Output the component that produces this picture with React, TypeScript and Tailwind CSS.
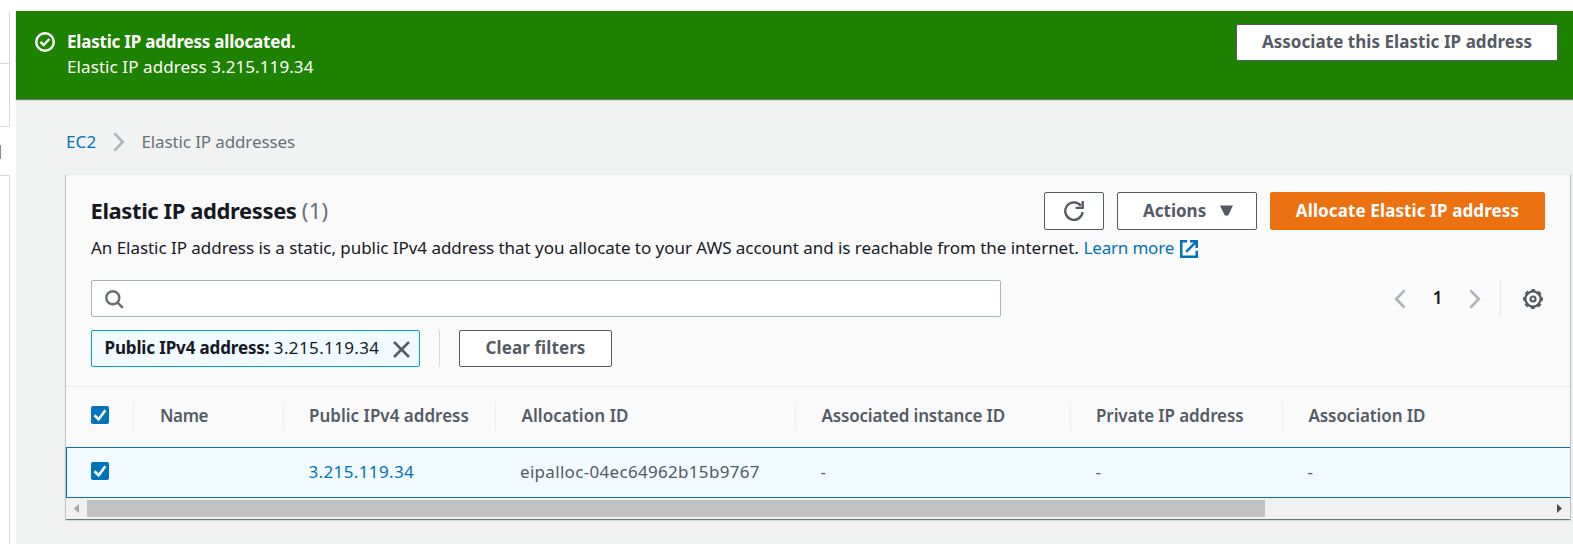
import type { ReactNode } from "react";

function Check() {
  return (
    <span className="flex h-[18px] w-[18px] shrink-0 rounded-[2px] bg-[#0073bb]">
      <svg width="18" height="18" viewBox="0 0 18 18" fill="none" stroke="#fff" strokeWidth="2.6">
        <path d="M3.4 9.2 7.600 13.200 14.400 4.200" />
      </svg>
    </span>
  );
}

function Chevron({ flip = false }: { flip?: boolean }) {
  return (
    <svg width="12" height="20" viewBox="0 0 12 20" fill="none" stroke="#aab7b8" strokeWidth="2.6">
      <path d={flip ? "M10.6 1.4 2.2 10l8.4 8.6" : "M1.4 1.4 9.8 10l-8.4 8.6"} />
    </svg>
  );
}

function Button({ className, children }: { className: string; children: ReactNode }) {
  return (
    <button
      type="button"
      className={`flex shrink-0 items-center whitespace-nowrap rounded-[2px] border font-bold ${className}`}
    >
      {children}
    </button>
  );
}

function HeaderCell({ className, children }: { className: string; children?: ReactNode }) {
  return (
    <div className={`flex h-[29px] shrink-0 items-center whitespace-nowrap ${className}`}>{children}</div>
  );
}

export default function App() {
  return (
    <div className="flex h-[544px] w-[1573px] overflow-hidden bg-white pt-[11px] font-['Noto_Sans',sans-serif] text-[17px] leading-[25px] text-[#16191f]">
      <aside className="flex w-[16px] shrink-0 flex-col">
        <div className="h-[53px] w-[10px] border-r border-b border-[#d9d9d9]" />
        <div className="h-[63px] w-[10px] border-r border-b border-[#d9d9d9]" />
        <div className="mt-[18px] h-[14px] w-px bg-[#8c8c8c]" />
        <div className="mt-[16px] w-[10px] flex-1 border-t border-r border-[#d9d9d9]" />
      </aside>

      <main className="flex min-w-0 flex-1 flex-col bg-[#f1f3f3]">
        <section className="flex h-[88px] shrink-0 items-start bg-[#1d8102] pl-[19px] text-white shadow-[0_1px_1px_0_rgba(0,0,0,0.5)]">
          <svg className="mt-[21px] shrink-0" width="20" height="20" viewBox="0 0 20 20" fill="none" stroke="#fff" strokeWidth="2.4">
            <circle cx="10" cy="10" r="8.8" />
            <path d="M5.4 9.8 8.7 13l5.7-6" />
          </svg>
          <div className="mt-[18px] ml-[12px] flex-1">
            <p className="font-bold tracking-[-0.2px]">Elastic IP address allocated.</p>
            <p className="tracking-[0.09px]">Elastic IP address 3.215.119.34</p>
          </div>
          <Button className="mt-[13px] mr-[15px] h-[37px] w-[322px] justify-center border-[#545b64] bg-white pb-[2px] tracking-[0.05px] text-[#545b64]">
            Associate this Elastic IP address
          </Button>
        </section>

        <nav className="mt-[30px] ml-[50px] flex h-[25px] items-center">
          <span className="w-[47px] tracking-[0.1px] text-[#0073bb]">EC2</span>
          <Chevron />
          <span className="ml-[16.500px] tracking-[-0.12px] text-[#687078]">Elastic IP addresses</span>
        </nav>

        <section className="mt-[20px] ml-[50px] flex h-[345px] w-[1504px] shrink-0 flex-col border-t border-[#eaeded] bg-[#fafafa] shadow-[0_1px_1px_0_rgba(0,28,36,0.4),1px_1px_1px_0_rgba(0,28,36,0.15),-1px_1px_1px_0_rgba(0,28,36,0.15)]">
          <div className="mt-[17px] flex h-[38px] items-center pr-[25px] pl-[24.500px]">
            <h1 className="flex-1 pb-[2px] text-[22px] font-bold tracking-[-0.4px]">
              Elastic IP addresses <span className="font-normal tracking-[0.2px] text-[#687078]">(1)</span>
            </h1>
            <Button className="h-[38px] w-[60px] justify-center border-[#545b64] bg-white text-[#545b64]">
              <svg width="20" height="20" viewBox="0 0 20 20" fill="none" stroke="#545b64" strokeWidth="2.4">
                <path d="M18.6 11.2a8.7 8.7 0 1 1-1.8-6.5" />
                <path d="M18.7 0v6.9h-7" />
              </svg>
            </Button>
            <Button className="ml-[13px] h-[38px] w-[140px] border-[#545b64] bg-white pb-[1px] pl-[25px] tracking-[0px] text-[#545b64]">
              Actions
              <svg className="ml-[14px]" width="13" height="11" viewBox="0 0 13 11" fill="#545b64">
                <path d="M0 .5h13L8.2 10.500H4.800Z" />
              </svg>
            </Button>
            <Button className="ml-[13px] h-[38px] w-[275px] justify-center border-[#ec7211] bg-[#ec7211] pb-[1px] tracking-[0.12px] text-white">
              Allocate Elastic IP address
            </Button>
          </div>

          <p className="mt-[5px] flex h-[25px] items-center pl-[25px] whitespace-nowrap">
            <span className="w-[992.500px] tracking-[-0.04px]">
              An Elastic IP address is a static, public IPv4 address that you allocate to your AWS account and is reachable from the internet.
            </span>
            <a className="flex items-center tracking-[-0.18px] text-[#0073bb]">
              Learn more
              <svg className="mt-[2px] ml-[6px]" width="18" height="18" viewBox="0 0 18 18" fill="none" stroke="#0073bb" strokeWidth="2.5">
                <path d="M7.2 1.25H1.25v15.5h15.5v-6" />
                <path d="M10 1.250h6.750V8M16.300 1.700 6.200 11.800" />
              </svg>
            </a>
          </p>

          <div className="mt-[20px] flex h-[37px] items-center pr-[27px] pl-[25px]">
            <div className="flex h-[37px] w-[910px] items-center rounded-[2px] border border-[#aab7b8] bg-white pl-[13px]">
              <svg className="mt-px" width="19" height="19" viewBox="0 0 19 19" fill="none" stroke="#687078" strokeWidth="2.5">
                <circle cx="7.8" cy="7.8" r="6.5" />
                <path d="m12.4 12.4 5.4 5.4" />
              </svg>
            </div>
            <div className="ml-auto flex h-[37px] items-center">
              <Chevron flip />
              <span className="mr-[26px] ml-[26px] w-[11px] pb-[2px] text-center font-semibold">1</span>
              <Chevron />
              <span className="ml-[19px] h-[37px] w-px bg-[#e3e7e7]" />
              <svg className="ml-[22px]" width="20" height="20" viewBox="0 0 20 20" fill="none" stroke="#545b64">
                <circle cx="10" cy="10" r="7.600" strokeWidth="2.300" />
                <circle cx="10" cy="10" r="9" strokeWidth="2" strokeDasharray="3.800 3.269" strokeDashoffset="1.900" />
                <circle cx="10" cy="10" r="2.500" strokeWidth="2.200" />
              </svg>
            </div>
          </div>

          <div className="mt-[13px] flex h-[37px] pl-[25px]">
            <div className="flex h-[37px] w-[329px] items-center rounded-[2px] border border-[#00a1c9] bg-[#f1faff] pl-[12.500px] whitespace-nowrap">
              <span className="pb-[2px] font-bold tracking-[-0.14px]">Public IPv4 address:</span>
              <span className="ml-[4.500px] pb-[2px] tracking-[0.370px]">3.215.119.34</span>
              <svg className="mt-px ml-[13.500px]" width="17" height="17" viewBox="0 0 17 17" fill="none" stroke="#545b64" strokeWidth="2.500">
                <path d="m1 1 15 15M16 1 1 16" />
              </svg>
            </div>
            <span className="ml-[19px] w-px bg-[#d5dbdb]" />
            <Button className="ml-[19px] h-[37px] w-[153px] justify-center border-[#545b64] bg-white pb-[2px] tracking-[0.1px] text-[#545b64]">
              Clear filters
            </Button>
          </div>

          <div className="mt-[19px] flex h-[61px] shrink-0 items-center border-t border-[#eaeded] pb-px font-semibold text-[#545b64]">
            <HeaderCell className="w-[68px] border-r border-[#eaeded] pb-[3px] pl-[25px]"><Check /></HeaderCell>
            <HeaderCell className="w-[150px] border-r border-[#eaeded] pb-[2px] pl-[26px] tracking-[-0.4px]">Name</HeaderCell>
            <HeaderCell className="w-[212px] border-r border-[#eaeded] pb-[2px] pl-[25px] tracking-[0.010px]">Public IPv4 address</HeaderCell>
            <HeaderCell className="w-[300px] border-r border-[#eaeded] pb-[2px] pl-[25.500px] tracking-[0.060px]">Allocation ID</HeaderCell>
            <HeaderCell className="w-[275px] border-r border-[#eaeded] pb-[2px] pl-[25.500px] tracking-[-0.170px]">Associated instance ID</HeaderCell>
            <HeaderCell className="w-[212px] border-r border-[#eaeded] pb-[2px] pl-[25px] tracking-[-0.100px]">Private IP address</HeaderCell>
            <HeaderCell className="flex-1 pb-[2px] pl-[25.500px] tracking-[-0.100px]">Association ID</HeaderCell>
          </div>

          <div className="flex h-[51px] shrink-0 items-center border border-r-0 border-[#0073bb] bg-[#f1faff] pb-[3px] text-[#545b64]">
            <div className="w-[241.500px] pl-[24px]"><Check /></div>
            <div className="w-[211.500px] tracking-[0.370px] text-[#0073bb]">3.215.119.34</div>
            <div className="w-[300.500px] tracking-[0.310px]">eipalloc-04ec64962b15b9767</div>
            <div className="w-[275px]">-</div>
            <div className="w-[212px]">-</div>
            <div>-</div>
          </div>

          <div className="flex h-[21px] shrink-0 items-center bg-[#f1f1f1] pr-[8px] pl-[8px]">
            <svg width="5" height="9" viewBox="0 0 5 9" fill="#a3a3a3"><path d="M5 0v9L0 4.500Z" /></svg>
            <div className="ml-[8px] h-[17px] w-[1178px] bg-[#c1c1c1]" />
            <svg className="ml-auto" width="5" height="9" viewBox="0 0 5 9" fill="#505050"><path d="M0 0v9l5-4.500Z" /></svg>
          </div>
        </section>
      </main>
    </div>
  );
}
